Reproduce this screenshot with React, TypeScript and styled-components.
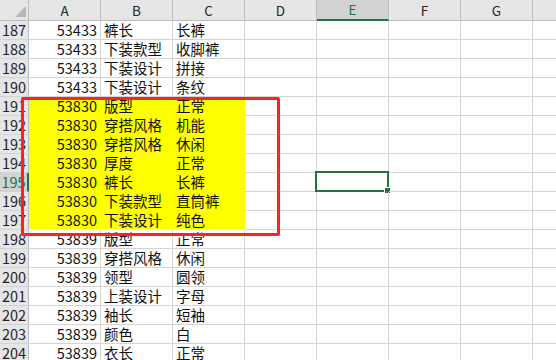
import React from "react";
import styled, { createGlobalStyle, css } from "styled-components";

const GREEN = "#217346";
const GRID = "#d4d4d4";
const HEAD_BG = "#e6e6e6";
const HEAD_SEL = "#d2d2d2";
const HEAD_LINE = "#bdbdbd";
const FILL = "#ffff00";

const Global = createGlobalStyle`
  html, body { margin: 0; padding: 0; background: #fff; overflow: hidden; }
  body { width: 556px; height: 360px; font-family: "Noto Sans CJK SC", "Liberation Sans", sans-serif; }
`;

const Sheet = styled.div`
  position: relative;
  width: 556px;
  height: 360px;
  overflow: hidden;
  background: #fff;
`;

const COLS = "29px repeat(8, 72px)";

const HeaderRow = styled.div`
  display: grid;
  grid-template-columns: ${COLS};
  height: 21px;
`;

const Corner = styled.div`
  position: relative;
  box-sizing: border-box;
  background: ${HEAD_BG};
  border-right: 1px solid ${HEAD_LINE};
  border-bottom: 1px solid ${HEAD_LINE};
  svg { position: absolute; right: 2px; bottom: 3px; }
`;

const ColHead = styled.div<{ $sel?: boolean }>`
  box-sizing: border-box;
  display: flex;
  align-items: flex-end;
  justify-content: center;
  padding-bottom: 1px;
  background: ${(p) => (p.$sel ? HEAD_SEL : HEAD_BG)};
  border-right: 1px solid ${HEAD_LINE};
  border-bottom: ${(p) => (p.$sel ? `2px solid ${GREEN}` : `1px solid ${HEAD_LINE}`)};
  color: ${(p) => (p.$sel ? GREEN : "#222")};
  font-family: "Noto Sans CJK SC", "Liberation Sans", sans-serif;
  font-size: 13.5px;
  line-height: 18px;
`;

const Row = styled.div`
  display: grid;
  grid-template-columns: ${COLS};
  height: 19px;
`;

const RowHead = styled.div<{ $sel?: boolean }>`
  box-sizing: border-box;
  display: flex;
  align-items: flex-end;
  justify-content: center;
  background: ${(p) => (p.$sel ? HEAD_SEL : HEAD_BG)};
  border-right: ${(p) => (p.$sel ? `2px solid ${GREEN}` : `1px solid ${HEAD_LINE}`)};
  border-bottom: 1px solid ${GRID};
  color: ${(p) => (p.$sel ? GREEN : "#1f1f2e")};
  font-size: 14.5px;
  line-height: 18px;
`;

const Cell = styled.div<{ $align?: "left" | "right"; $fill?: boolean; $lastFill?: boolean }>`
  position: relative;
  box-sizing: border-box;
  display: flex;
  align-items: flex-end;
  justify-content: ${(p) => (p.$align === "right" ? "flex-end" : "flex-start")};
  padding: 0 3px;
  white-space: nowrap;
  color: #111;
  font-size: 14.5px;
  line-height: 18px;
  border-right: 1px solid ${GRID};
  border-bottom: 1px solid ${GRID};
  ${(p) =>
    p.$fill &&
    css`
      background: ${FILL};
      border-right-color: ${FILL};
      border-bottom-color: ${p.$lastFill ? "#fff" : FILL};
    `}
`;

const Selection = styled.div`
  position: absolute;
  top: -2px;
  left: -2px;
  right: -1px;
  bottom: -1px;
  border: 2px solid ${GREEN};
  pointer-events: none;
`;

const FillHandle = styled.div`
  position: absolute;
  right: -4px;
  bottom: -4px;
  width: 5px;
  height: 5px;
  background: ${GREEN};
  border: 1px solid #fff;
`;

const Highlight = styled.div`
  position: absolute;
  left: 21px;
  top: 97px;
  width: 259px;
  height: 139px;
  box-sizing: border-box;
  border: 3px solid #ff2121;
  border-radius: 2px;
  pointer-events: none;
`;

type R = { n: number; a: string; b: string; c: string };

const rows: R[] = [
  { n: 187, a: "53433", b: "裤长", c: "长裤" },
  { n: 188, a: "53433", b: "下装款型", c: "收脚裤" },
  { n: 189, a: "53433", b: "下装设计", c: "拼接" },
  { n: 190, a: "53433", b: "下装设计", c: "条纹" },
  { n: 191, a: "53830", b: "版型", c: "正常" },
  { n: 192, a: "53830", b: "穿搭风格", c: "机能" },
  { n: 193, a: "53830", b: "穿搭风格", c: "休闲" },
  { n: 194, a: "53830", b: "厚度", c: "正常" },
  { n: 195, a: "53830", b: "裤长", c: "长裤" },
  { n: 196, a: "53830", b: "下装款型", c: "直筒裤" },
  { n: 197, a: "53830", b: "下装设计", c: "纯色" },
  { n: 198, a: "53839", b: "版型", c: "正常" },
  { n: 199, a: "53839", b: "穿搭风格", c: "休闲" },
  { n: 200, a: "53839", b: "领型", c: "圆领" },
  { n: 201, a: "53839", b: "上装设计", c: "字母" },
  { n: 202, a: "53839", b: "袖长", c: "短袖" },
  { n: 203, a: "53839", b: "颜色", c: "白" },
  { n: 204, a: "53839", b: "衣长", c: "正常" },
];

const letters = ["A", "B", "C", "D", "E", "F", "G", "H"];

export default function App() {
  return (
    <>
      <Global />
      <Sheet>
        <HeaderRow>
          <Corner>
            <svg width="11" height="11" viewBox="0 0 11 11">
              <polygon points="11,0 11,11 0,11" fill="#b9b9b9" />
            </svg>
          </Corner>
          {letters.map((l) => (
            <ColHead key={l} $sel={l === "E"}>
              {l}
            </ColHead>
          ))}
        </HeaderRow>
        {rows.map((r) => {
          const fill = r.n >= 191 && r.n <= 197;
          const last = r.n === 197;
          const sel = r.n === 195;
          return (
            <Row key={r.n}>
              <RowHead $sel={sel}>{r.n}</RowHead>
              <Cell $align="right" $fill={fill} $lastFill={last}>{r.a}</Cell>
              <Cell $fill={fill} $lastFill={last}>{r.b}</Cell>
              <Cell $fill={fill} $lastFill={last}>{r.c}</Cell>
              <Cell />
              <Cell>
                {sel && (
                  <Selection>
                    <FillHandle />
                  </Selection>
                )}
              </Cell>
              <Cell />
              <Cell />
              <Cell />
            </Row>
          );
        })}
        <Highlight />
      </Sheet>
    </>
  );
}
